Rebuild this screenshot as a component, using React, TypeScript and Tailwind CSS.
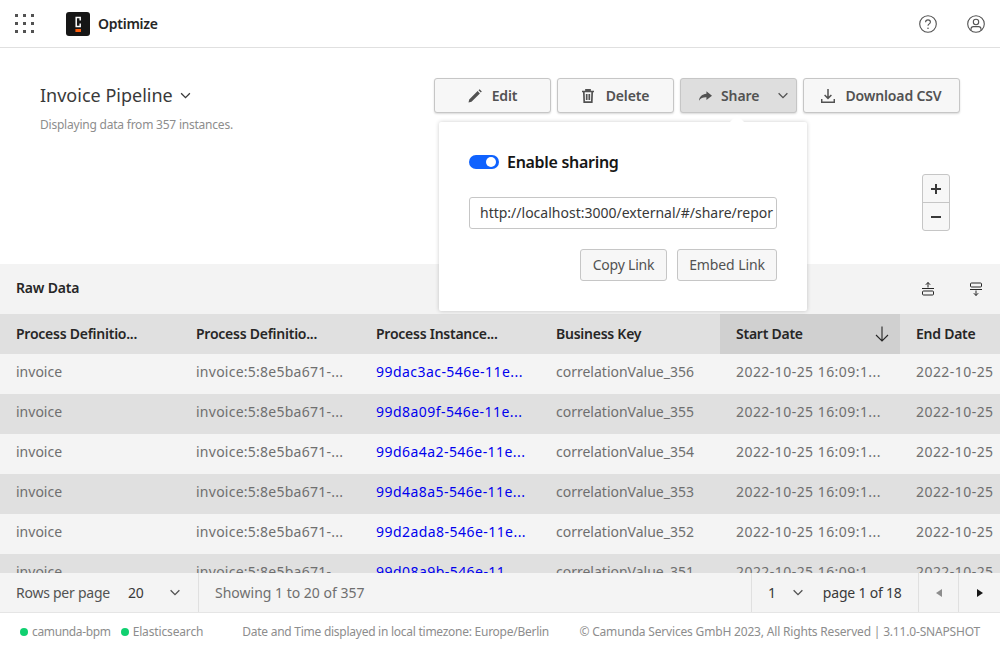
const rows = [
  ["99dac3ac-546e-11e...", "correlationValue_356"],
  ["99d8a09f-546e-11e...", "correlationValue_355"],
  ["99d6a4a2-546e-11e...", "correlationValue_354"],
  ["99d4a8a5-546e-11e...", "correlationValue_353"],
  ["99d2ada8-546e-11e...", "correlationValue_352"],
  ["99d08a9b-546e-11...", "correlationValue_351"],
];

const headers = ["Process Definitio...", "Process Definitio...", "Process Instance...", "Business Key", "Start Date", "End Date"];

function Chevron({ className }: { className?: string }) {
  return (
    <svg viewBox="0 0 12 8" fill="none" stroke="currentColor" strokeWidth="1.5" className={className}>
      <path d="M1 1.5l5 5 5-5" />
    </svg>
  );
}

function ActionButton({ icon, label, width }: { icon: React.ReactNode; label: string; width: string }) {
  return (
    <button className={`flex h-[35px] items-center justify-center gap-[10px] rounded-[3px] border border-[#c6c6c6] bg-[#f7f7f7] text-sm font-semibold tracking-[-0.15px] text-[#525252] shadow-[0_1px_2px_rgba(0,0,0,0.15)] ${width}`}>
      {icon}
      {label}
    </button>
  );
}

export default function App() {
  return (
    <div className="flex h-[650px] w-[1000px] flex-col overflow-hidden bg-white font-['Noto_Sans',sans-serif] text-[#525252]">
      <header className="flex h-12 shrink-0 items-center border-b border-[#e0e0e0] pr-[15px] pl-[15px]">
        <div className="grid w-[19px] grid-cols-3 gap-[5px]">
          {Array.from({ length: 9 }).map((_, i) => (
            <div key={i} className="h-[3px] w-[3px] bg-[#525252]" />
          ))}
        </div>
        <svg viewBox="0 0 24 24" className="ml-[32px] h-6 w-6">
          <rect width="24" height="24" rx="3" fill="#161616" />
          <path d="M14.2 8.6V5.6H10.2V14.4H14.2V11.6" fill="none" stroke="#fff" strokeWidth="1.5" />
          <rect x="9.4" y="17" width="5.6" height="3" fill="#fc5d0d" />
        </svg>
        <span className="ml-2 text-sm font-semibold tracking-[-0.25px] text-[#262626]">Optimize</span>
        <svg viewBox="0 0 18 18" fill="none" stroke="#525252" strokeWidth="1.1" className="ml-auto h-[18px] w-[18px]">
          <circle cx="9" cy="9" r="8.3" />
          <path d="M6.6 7.2c0-1.4 1-2.3 2.4-2.3s2.4.9 2.4 2.2c0 1.9-2.4 1.7-2.4 3.7" />
          <circle cx="9" cy="13.2" r="0.8" fill="#525252" stroke="none" />
        </svg>
        <svg viewBox="0 0 18 18" fill="none" stroke="#525252" strokeWidth="1.1" className="ml-[30px] h-[18px] w-[18px]">
          <circle cx="9" cy="9" r="8.3" />
          <circle cx="9" cy="7" r="2.7" />
          <path d="M4 15.2v-1.2c0-1.4 1-2.4 2.4-2.4h5.2c1.4 0 2.4 1 2.4 2.4v1.2" />
        </svg>
      </header>

      <section className="relative h-[216px] shrink-0 px-10 pt-[30px]">
        <div className="flex items-start justify-between">
          <div>
            <div className="flex items-center gap-[7px] pt-[3px] text-lg text-[#393939]">
              Invoice Pipeline
              <Chevron className="h-[7px] w-[11px] text-[#393939]" />
            </div>
            <div className="mt-2 text-xs tracking-[-0.22px] text-[#8d8d8d]">Displaying data from 357 instances.</div>
          </div>
          <div className="flex gap-[6px]">
            <ActionButton
              width="w-[117px]"
              label="Edit"
              icon={
                <svg viewBox="0 0 14 14" className="h-[14px] w-[14px] fill-[#525252]">
                  <path d="M0.5 13.5l.7-3L9.6 2.1l2.3 2.3-8.4 8.4zM10.5 1.2L11.6.2l2.2 2.2-1 1.1z" />
                </svg>
              }
            />
            <ActionButton
              width="w-[117px]"
              label="Delete"
              icon={
                <svg viewBox="0 0 12 14" fill="none" stroke="#525252" strokeWidth="1.7" className="mr-[2px] h-[14px] w-[12px]">
                  <path d="M0 2.5h12M4 2.5V.8h4v1.7M1.8 2.5l.4 10.7h7.6l.4-10.7M4.7 5v6M7.3 5v6" />
                </svg>
              }
            />
            <button className="flex h-[35px] w-[117px] items-center rounded-[3px] border border-[#c6c6c6] bg-[#dedede] pr-[7px] pl-[18px] text-sm font-semibold tracking-[-0.1px] text-[#525252] shadow-[0_1px_2px_rgba(0,0,0,0.15)]">
              <svg viewBox="0 0 14 10" className="h-[10px] w-[13px] fill-[#525252]">
                <path d="M8 0l6 4.6L8 9.2V6.4C4.6 6.2 2 7.2 0 10c.6-4.6 3.4-7 8-7.4z" />
              </svg>
              <span className="ml-[9px]">Share</span>
              <Chevron className="ml-auto h-[7px] w-[12px]" />
            </button>
            <ActionButton
              width="w-[157px]"
              label="Download CSV"
              icon={
                <svg viewBox="0 0 14 14" fill="none" stroke="#525252" strokeWidth="1.5" className="h-[14px] w-[14px]">
                  <path d="M7 0v9M3.6 6L7 9.4 10.4 6M.7 10v3.2h12.6V10" />
                </svg>
              }
            />
          </div>
        </div>

        <div className="absolute top-[126px] right-[50px] flex w-[28px] flex-col overflow-hidden rounded-[3px] border border-[#c6c6c6] bg-[#f7f7f7] text-[#393939]">
          <div className="flex h-7 items-center justify-center border-b border-[#c6c6c6]">
            <svg viewBox="0 0 10 10" className="h-[10px] w-[10px]" stroke="#393939" strokeWidth="2">
              <path d="M5 0v10M0 5h10" />
            </svg>
          </div>
          <div className="flex h-[27px] items-center justify-center">
            <svg viewBox="0 0 10 10" className="h-[10px] w-[10px]" stroke="#393939" strokeWidth="2">
              <path d="M0 5h10" />
            </svg>
          </div>
        </div>
      </section>

      <section className="flex min-h-0 flex-1 flex-col overflow-hidden bg-[#f4f4f4]">
        <div className="flex h-[50px] shrink-0 items-center bg-[#f3f3f3] pr-[17px] pb-[1px] pl-4 text-sm font-semibold tracking-[-0.2px] text-[#262626]">
          <span className="-mt-[1px]">Raw Data</span>
          <svg viewBox="0 0 14 14" fill="none" stroke="#262626" className="ml-auto h-[14px] w-[14px]">
            <path d="M7 0.5v5M4.8 2.8L7 0.5l2.2 2.3" />
            <path d="M1 6.5h12" />
            <rect x="1.5" y="9" width="11" height="4" rx="1" />
          </svg>
          <svg viewBox="0 0 14 14" fill="none" stroke="#262626" className="ml-[34px] h-[14px] w-[14px]">
            <rect x="1.5" y="1" width="11" height="4" rx="1" />
            <path d="M1 7.5h12M7 8.5v5M4.8 11.2L7 13.5l2.2-2.3" />
          </svg>
        </div>
        <div className="grid h-10 w-[1080px] shrink-0 grid-cols-6 bg-[#e0e0e0] text-sm font-semibold tracking-[-0.25px] text-[#262626]">
          {headers.map((h, i) => (
            <div key={i} className={`flex items-center justify-between pr-[11px] pl-4 ${i === 4 ? "bg-[#d0d0d0]" : ""}`}>
              {h}
              {i === 4 && (
                <svg viewBox="0 0 14 16" fill="none" stroke="#262626" strokeWidth="1.1" className="h-4 w-[14px]">
                  <path d="M7 0.5v14.5M1 9l6 6 6-6" />
                </svg>
              )}
            </div>
          ))}
        </div>
        {rows.map((r, i) => (
          <div key={i} className={`grid h-10 w-[1080px] shrink-0 grid-cols-6 items-center pb-[5px] text-sm whitespace-nowrap text-[#6f6f6f] ${i % 2 ? "bg-[#e0e0e0]" : "bg-[#f4f4f4]"}`}>
            <div className="pl-4">invoice</div>
            <div className="pl-4 tracking-[0.25px]">invoice:5:8e5ba671-...</div>
            <div className="pl-4 tracking-[0.45px] text-[#0000ee]">{r[0]}</div>
            <div className="pl-4">{r[1]}</div>
            <div className="pl-4 tracking-[0.45px]">2022-10-25 16:09:1...</div>
            <div className="pl-4 tracking-[0.45px] [word-spacing:5px]">2022-10-25 16:09:1...</div>
          </div>
        ))}
      </section>

      <div className="flex h-10 shrink-0 items-stretch border-b border-[#e5e5e5] bg-[#f4f4f4] text-sm text-[#525252]">
        <div className="flex w-[199px] items-center border-r border-[#e0e0e0] pl-4 tracking-[-0.25px]">
          Rows per page
          <span className="ml-[18px] text-[#393939]">20</span>
          <Chevron className="ml-[26px] h-[7px] w-[12px]" />
        </div>
        <div className="flex flex-1 items-center pl-4 text-[#6f6f6f]">Showing 1 to 20 of 357</div>
        <div className="flex w-[168px] items-center border-x border-[#e0e0e0] pl-4 tracking-[-0.2px] text-[#393939]">
          1
          <Chevron className="ml-[16px] h-[7px] w-[12px] text-[#525252]" />
          <span className="ml-[19px]">page 1 of 18</span>
        </div>
        <div className="flex w-10 items-center justify-center border-r border-[#e0e0e0]">
          <svg viewBox="0 0 6 8" className="h-2 w-[6px] fill-[#8d8d8d]"><path d="M6 0v8L0 4z" /></svg>
        </div>
        <div className="flex w-[41px] items-center justify-center">
          <svg viewBox="0 0 6 8" className="h-2 w-[6px] fill-[#161616]"><path d="M0 0v8l6-4z" /></svg>
        </div>
      </div>

      <footer className="flex h-[37px] shrink-0 items-center pr-5 pl-5 text-xs whitespace-nowrap text-[#8d8d8d]">
        <span className="h-2 w-2 rounded-full bg-[#10d070]" />
        <span className="ml-1 tracking-[-0.35px]">camunda-bpm</span>
        <span className="ml-[10px] h-2 w-2 rounded-full bg-[#10d070]" />
        <span className="ml-1 tracking-[-0.15px]">Elasticsearch</span>
        <span className="ml-[39px] tracking-[-0.26px]">Date and Time displayed in local timezone: Europe/Berlin</span>
        <span className="ml-auto tracking-[-0.18px]">© Camunda Services GmbH 2023, All Rights Reserved | 3.11.0-SNAPSHOT</span>
      </footer>

      <div className="absolute top-[122px] left-[439px] w-[368px] rounded-[2px] bg-white p-[30px] shadow-[0_0_4px_rgba(0,0,0,0.2)]">
        <div className="absolute -top-[5px] left-[293px] h-[10px] w-[10px] rotate-45 bg-white" />
        <div className="flex h-5 items-center gap-2 text-base leading-5 font-semibold tracking-[-0.3px] text-[#161616]">
          <div className="flex h-[14px] w-[30px] items-center justify-end rounded-full bg-[#0f62fe] pr-[3px]">
            <div className="h-[10px] w-[10px] rounded-full bg-white" />
          </div>
          Enable sharing
        </div>
        <div className="mt-[25px] flex h-8 items-center overflow-hidden rounded-[3px] border border-[#c6c6c6] px-[10px] text-sm whitespace-nowrap text-[#393939]">
          http://localhost:3000/external/#/share/repor
        </div>
        <div className="mt-5 flex justify-end gap-[10px]">
          <button className="h-8 w-[87px] rounded-[3px] border border-[#c6c6c6] bg-[#f7f7f7] text-sm tracking-[-0.2px] text-[#525252]">Copy Link</button>
          <button className="h-8 w-[100px] rounded-[3px] border border-[#c6c6c6] bg-[#f7f7f7] text-sm tracking-[-0.1px] text-[#525252]">Embed Link</button>
        </div>
      </div>
    </div>
  );
}
